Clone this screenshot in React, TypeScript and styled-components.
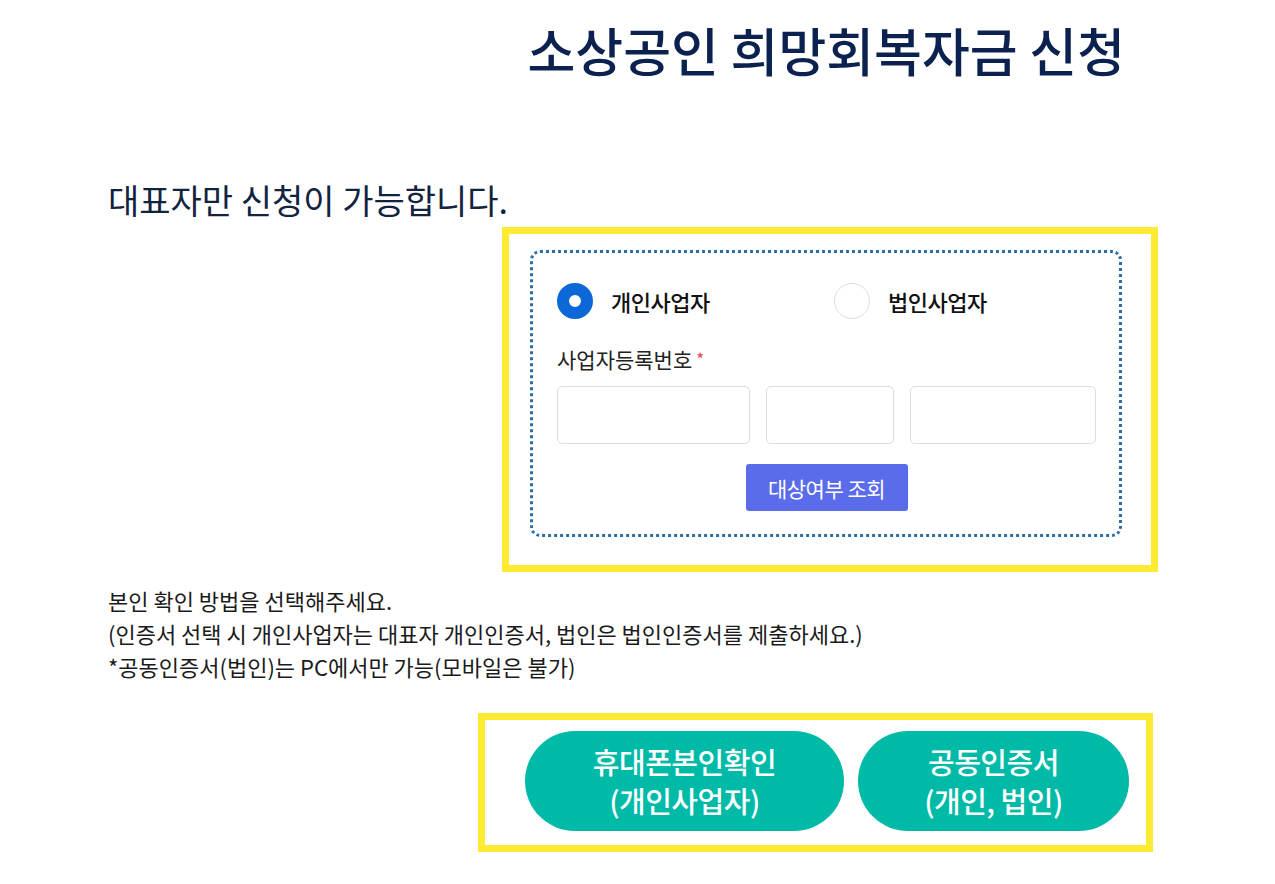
import React, { useState } from "react";
import styled, { createGlobalStyle } from "styled-components";

const GlobalStyle = createGlobalStyle`
  body {
    margin: 0;
    background: #fff;
    font-family: "Noto Sans CJK KR", "Noto Sans", sans-serif;
  }
`;

const Page = styled.div`
  width: 1050px;
  padding: 19px 0 40px 108px;
`;

const Title = styled.h1`
  margin: 0;
  padding-right: 33px;
  text-align: right;
  font-size: 52px;
  line-height: 62px;
  font-weight: 500;
  color: #0b2150;
`;

const Subtitle = styled.h2`
  margin: 97px 0 0;
  font-size: 34px;
  line-height: 44px;
  font-weight: 400;
  color: #122340;
`;

const Highlight = styled.section<{ $left: number; $width: number; $pad: string; $top: number }>`
  box-sizing: border-box;
  margin: ${(p) => p.$top}px 0 0 ${(p) => p.$left}px;
  width: ${(p) => p.$width}px;
  border: 7px solid #fee933;
  padding: ${(p) => p.$pad};
`;

const DottedCard = styled.div`
  border: 3px dotted #2d6ea7;
  border-radius: 10px;
  padding: 30px 23px 23px 24px;
`;

const RadioRow = styled.div`
  display: flex;
`;

const RadioOption = styled.label`
  display: flex;
  flex-shrink: 0;
  align-items: center;
  gap: 18px;
  width: 277px;
  cursor: pointer;
  font-size: 22px;
  font-weight: 500;
  letter-spacing: -0.5px;
  color: #111;
`;

const RadioDot = styled.span<{ $checked: boolean }>`
  box-sizing: border-box;
  width: 36px;
  height: 36px;
  border-radius: 50%;
  background: #fff;
  border: ${(p) => (p.$checked ? "12px solid #0b68d6" : "1px solid #dcdcdc")};
`;

const FieldLabel = styled.div`
  margin-top: 27px;
  font-size: 21px;
  line-height: 26px;
  color: #222;
`;

const Required = styled.span`
  margin-left: 4px;
  color: #e84c4c;
  font-size: 17px;
  vertical-align: top;
`;

const InputRow = styled.div`
  display: flex;
  gap: 16px;
  margin-top: 14px;
`;

const NumberInput = styled.input<{ $w: number }>`
  box-sizing: border-box;
  width: ${(p) => p.$w}px;
  height: 58px;
  border: 1px solid #dedede;
  border-radius: 5px;
  font-size: 18px;
  padding: 0 10px;
`;

const SearchButton = styled.button`
  display: block;
  margin: 20px auto 0;
  width: 162px;
  height: 47px;
  border: 0;
  border-radius: 3px;
  background: #5b6cea;
  color: #fff;
  font-family: inherit;
  font-size: 21px;
  letter-spacing: -0.5px;
`;

const Notice = styled.p`
  margin: 12px 0 0;
  font-size: 22px;
  line-height: 33px;
  color: #1a1a1a;
`;

const PillRow = styled.div`
  display: flex;
  gap: 14px;
`;

const Pill = styled.button<{ $w: number }>`
  width: ${(p) => p.$w}px;
  height: 100px;
  border: 0;
  border-radius: 50px;
  background: #00baa8;
  color: #fff;
  font-family: inherit;
  font-size: 29px;
  line-height: 39px;
  font-weight: 500;
  letter-spacing: -0.5px;
`;

export default function App() {
  const [type, setType] = useState("personal");

  return (
    <Page>
      <GlobalStyle />
      <Title>소상공인 희망회복자금 신청</Title>
      <Subtitle>대표자만 신청이 가능합니다.</Subtitle>

      <Highlight $top={5} $left={394} $width={656} $pad="16px 29px 28px 21px">
        <DottedCard>
          <RadioRow>
            <RadioOption onClick={() => setType("personal")}>
              <RadioDot $checked={type === "personal"} />
              개인사업자
            </RadioOption>
            <RadioOption onClick={() => setType("corp")}>
              <RadioDot $checked={type === "corp"} />
              법인사업자
            </RadioOption>
          </RadioRow>
          <FieldLabel>
            사업자등록번호<Required>*</Required>
          </FieldLabel>
          <InputRow>
            <NumberInput $w={193} />
            <NumberInput $w={128} />
            <NumberInput $w={186} />
          </InputRow>
          <SearchButton>대상여부 조회</SearchButton>
        </DottedCard>
      </Highlight>

      <Notice>
        본인 확인 방법을 선택해주세요.
        <br />
        (인증서 선택 시 개인사업자는 대표자 개인인증서, 법인은 법인인증서를 제출하세요.)
        <br />
        *공동인증서(법인)는 PC에서만 가능(모바일은 불가)
      </Notice>

      <Highlight $top={30} $left={370} $width={675} $pad="11px 17px 14px 40px">
        <PillRow>
          <Pill $w={320}>
            휴대폰본인확인
            <br />
            (개인사업자)
          </Pill>
          <Pill $w={272}>
            공동인증서
            <br />
            (개인, 법인)
          </Pill>
        </PillRow>
      </Highlight>
    </Page>
  );
}
